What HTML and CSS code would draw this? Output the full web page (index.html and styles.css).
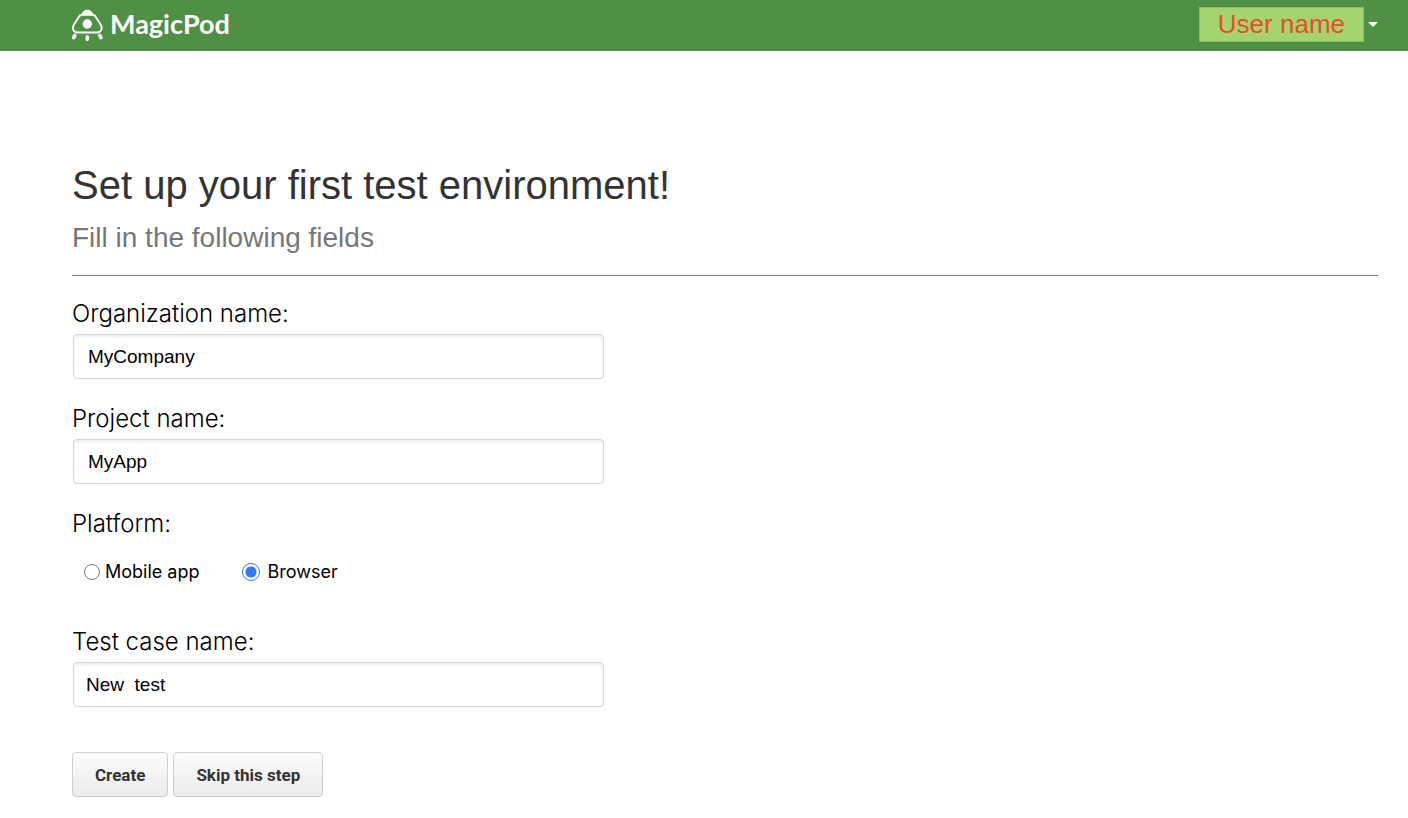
FILE: index.html
```html
<!DOCTYPE html>
<html lang="en">
<head>
<meta charset="utf-8">
<meta name="viewport" content="width=device-width, initial-scale=1">
<title>MagicPod</title>
<link rel="stylesheet" href="styles.css">
</head>
<body>
<header class="topbar">
  <a class="brand" href="#">
    <svg class="brand-icon" viewBox="0 0 32 34" aria-hidden="true">
      <path d="M8.500 6.500L2 16.500C-.5 21 1.800 24.500 5.500 24.500h19.600c3.700 0 6-3.500 3.500-8L22.100 6.500" fill="none" stroke="currentColor" stroke-width="1.800"/>
      <path d="M7.500 8.500C10.500 3.500 12.300 1.700 15.300 1.700s4.800 1.800 7.800 6.800c-1.300-.7-2.500-.8-3.800-.8h-8c-1.300 0-2.500.1-3.800.8z" fill="currentColor"/>
      <circle cx="15.300" cy="16" r="4.700" fill="currentColor"/>
      <ellipse cx="2.200" cy="28.500" rx="1.900" ry="3.100" transform="rotate(25 2.200 28.500)" fill="currentColor"/>
      <ellipse cx="15.300" cy="30" rx="1.900" ry="3.100" fill="currentColor"/>
      <ellipse cx="28.400" cy="28.500" rx="1.900" ry="3.100" transform="rotate(-25 28.400 28.500)" fill="currentColor"/>
    </svg>
    <span class="brand-name">MagicPod</span>
  </a>
  <button class="user-menu" type="button">
    <span class="user-name">User name</span>
    <span class="caret"></span>
  </button>
</header>
<main class="page">
  <div class="heading">
    <h1 class="title">Set up your first test environment!</h1>
    <p class="subtitle">Fill in the following fields</p>
  </div>
  <form class="form">
    <div class="field">
      <label class="label" for="organization">Organization name:</label>
      <input class="input" id="organization" type="text" value="MyCompany">
    </div>
    <div class="field">
      <label class="label" for="project">Project name:</label>
      <input class="input" id="project" type="text" value="MyApp">
    </div>
    <fieldset class="field platform">
      <legend class="label">Platform:</legend>
      <div class="options">
        <label class="option"><input class="radio" type="radio" name="platform">Mobile app</label>
        <label class="option"><input class="radio" type="radio" name="platform" checked>Browser</label>
      </div>
    </fieldset>
    <div class="field">
      <label class="label" for="testcase">Test case name:</label>
      <input class="input input-case" id="testcase" type="text" value="New  test">
    </div>
    <div class="actions">
      <button class="button" type="submit">Create</button>
      <button class="button" type="button">Skip this step</button>
    </div>
  </form>
</main>
</body>
</html>
```

FILE: styles.css
```css
* {
  box-sizing: border-box;
}

body {
  margin: 0;
  background: #fff;
  color: #000;
  font-family: Inter, "Liberation Sans", sans-serif;
}

.topbar {
  display: flex;
  align-items: center;
  justify-content: space-between;
  padding: 7px 30px 9px 72px;
  background: #508f46;
}

.brand {
  display: flex;
  align-items: flex-start;
  gap: 6px;
  color: #fff;
  text-decoration: none;
}

.brand-icon {
  width: 32px;
  height: 34px;
}

.brand-name {
  font: 700 27px/32px Lato, sans-serif;
}

.user-menu {
  display: flex;
  align-items: center;
  gap: 4px;
  padding: 0;
  border: 0;
  background: none;
}

.user-name {
  padding: 0 18px;
  border: 1px solid #8cc160;
  background: #a5d36f;
  color: #e34f29;
  font: 26px/33px "Liberation Sans", sans-serif;
}

.caret {
  border: 5px solid transparent;
  border-top-color: #fff;
  border-bottom: 0;
}

.page {
  padding: 108px 30px 20px 72px;
}

.heading {
  margin-bottom: 24px;
  padding-bottom: 18px;
  border-bottom: 1px solid #777;
  font-family: "Liberation Sans", sans-serif;
}

.title {
  margin: 0;
  color: #333;
  font-size: 40px;
  font-weight: 400;
  line-height: 52px;
}

.subtitle {
  margin: 8px 0 0;
  color: #777;
  font-size: 28px;
  line-height: 38px;
}

.field {
  margin: 0 0 26px;
  padding: 0;
  border: 0;
}

.label {
  display: block;
  margin-bottom: 6px;
  padding: 0;
  font-size: 24px;
  font-weight: 300;
  line-height: 28px;
}

.input {
  display: block;
  width: 100%;
  max-width: 531px;
  height: 45px;
  margin-left: 1px;
  padding: 0 14px;
  border: 1px solid #d6d6d6;
  border-radius: 4px;
  background: #fff;
  box-shadow: inset 0 2px 3px rgba(0, 0, 0, 0.07);
  color: #000;
  font: 19px "Liberation Sans", sans-serif;
}

.input-case {
  padding: 0 12px;
}

.options {
  display: flex;
  gap: 42px;
  padding: 16px 0 18px 12px;
}

.option {
  display: flex;
  align-items: center;
  gap: 5px;
  font-size: 18px;
  line-height: 24px;
}

.radio {
  appearance: none;
  width: 16px;
  height: 16px;
  margin: 0;
  border: 1px solid #777;
  border-radius: 50%;
  background: #fff;
}

.radio:checked {
  width: 18px;
  height: 18px;
  margin-right: 3px;
  border: 1px solid #3478f6;
  background: radial-gradient(circle, #3478f6 5px, #fff 6px);
}

.actions {
  display: flex;
  gap: 5px;
  padding-top: 19px;
}

.button {
  height: 45px;
  padding: 0 22px;
  border: 1px solid #cfcfcf;
  border-radius: 4px;
  background: linear-gradient(#fcfcfc, #ebebeb);
  color: #333;
  font: 700 17px Roboto, sans-serif;
}
```
